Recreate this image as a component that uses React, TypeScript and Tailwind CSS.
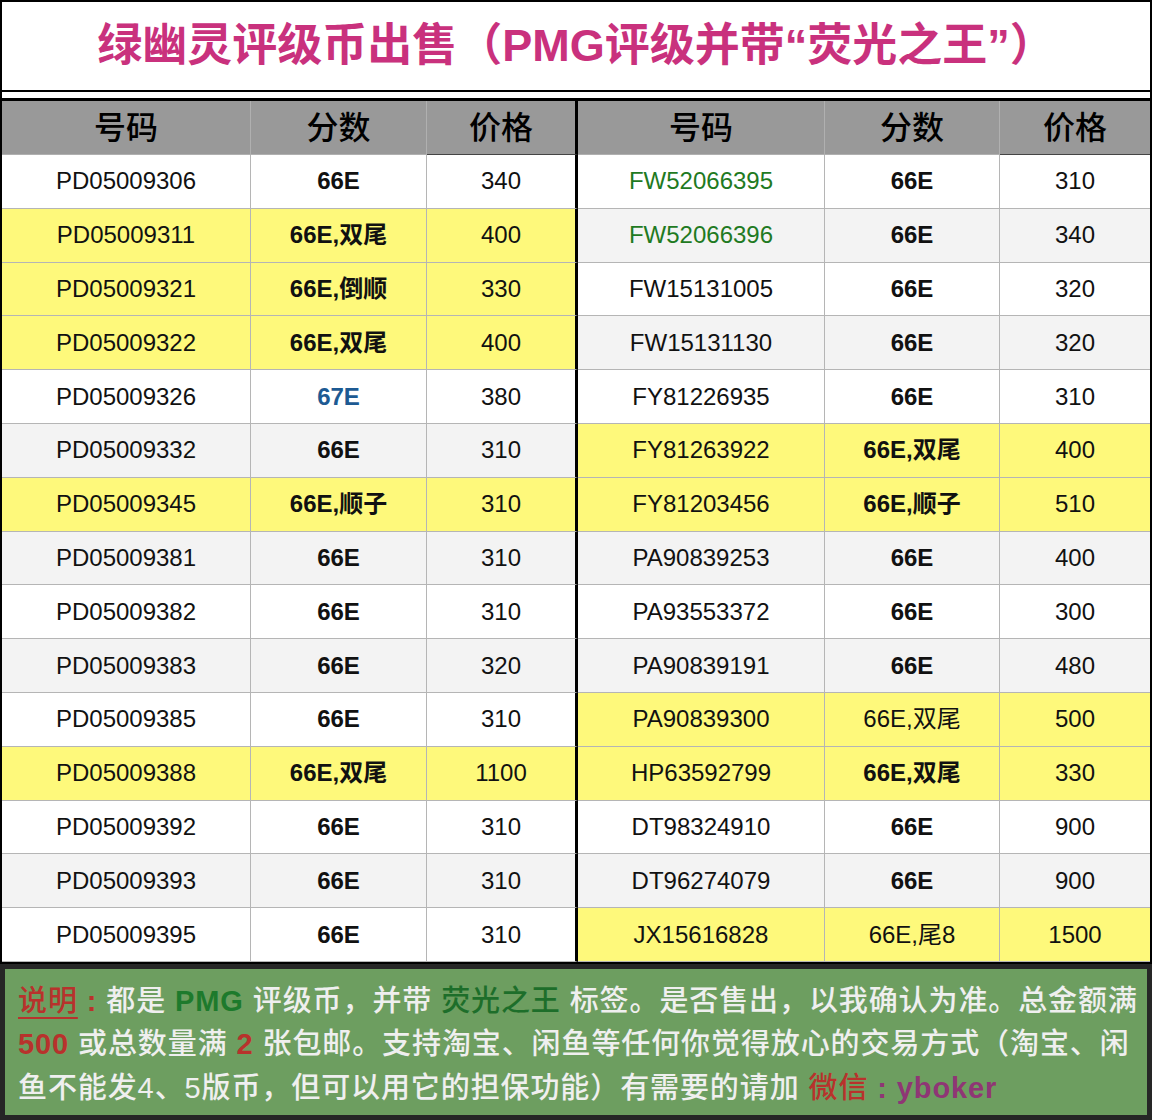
import React from "react";

type Cell = { code: string; score: string; price: string; y?: boolean; codeCls?: string; scoreCls?: string };

const left: Cell[] = [
  { code: "PD05009306", score: "66E", price: "340" },
  { code: "PD05009311", score: "66E,双尾", price: "400", y: true },
  { code: "PD05009321", score: "66E,倒顺", price: "330", y: true },
  { code: "PD05009322", score: "66E,双尾", price: "400", y: true },
  { code: "PD05009326", score: "67E", price: "380", scoreCls: "text-[#1d5a93] font-bold" },
  { code: "PD05009332", score: "66E", price: "310" },
  { code: "PD05009345", score: "66E,顺子", price: "310", y: true },
  { code: "PD05009381", score: "66E", price: "310" },
  { code: "PD05009382", score: "66E", price: "310" },
  { code: "PD05009383", score: "66E", price: "320" },
  { code: "PD05009385", score: "66E", price: "310" },
  { code: "PD05009388", score: "66E,双尾", price: "1100", y: true },
  { code: "PD05009392", score: "66E", price: "310" },
  { code: "PD05009393", score: "66E", price: "310" },
  { code: "PD05009395", score: "66E", price: "310" },
];

const right: Cell[] = [
  { code: "FW52066395", score: "66E", price: "310", codeCls: "text-[#1f7a22]" },
  { code: "FW52066396", score: "66E", price: "340", codeCls: "text-[#1f7a22]" },
  { code: "FW15131005", score: "66E", price: "320" },
  { code: "FW15131130", score: "66E", price: "320" },
  { code: "FY81226935", score: "66E", price: "310" },
  { code: "FY81263922", score: "66E,双尾", price: "400", y: true },
  { code: "FY81203456", score: "66E,顺子", price: "510", y: true },
  { code: "PA90839253", score: "66E", price: "400" },
  { code: "PA93553372", score: "66E", price: "300" },
  { code: "PA90839191", score: "66E", price: "480" },
  { code: "PA90839300", score: "66E,双尾", price: "500", y: true, scoreCls: "text-[#111] font-normal" },
  { code: "HP63592799", score: "66E,双尾", price: "330", y: true },
  { code: "DT98324910", score: "66E", price: "900" },
  { code: "DT96274079", score: "66E", price: "900" },
  { code: "JX15616828", score: "66E,尾8", price: "1500", y: true, scoreCls: "text-[#111] font-normal" },
];

const FONT = "font-['Liberation_Sans','Noto_Sans_CJK_SC',sans-serif]";

function cells(c: Cell, i: number, side: "l" | "r") {
  const bg = c.y ? "bg-[#fef97b]" : i % 2 === 1 ? "bg-[#f3f3f3]" : "bg-white";
  const base = `${bg} flex items-center justify-center border-b border-[#b5b5b5] text-[24px]`;
  return [
    <div key={side + "c" + i} className={`${base} border-r border-[#ababab] ${c.codeCls ?? "text-[#111]"}`}>{c.code}</div>,
    <div key={side + "s" + i} className={`${base} border-r border-[#ababab] ${c.scoreCls ?? "text-[#111] font-bold"}`}>{c.score}</div>,
    <div key={side + "p" + i} className={`${base} text-[#111] ${side === "l" ? "border-r-[3px] border-r-black" : ""}`}>{c.price}</div>,
  ];
}

export default function App() {
  const hdr = "flex items-center justify-center bg-[#999999] border-b border-[#444] text-[32px] font-medium text-black";
  return (
    <div className={`w-[1152px] h-[1120px] bg-white overflow-hidden ${FONT}`}>
      <div className="h-[92px] border-2 border-black flex items-center justify-center">
        <span className="text-[45px] font-bold text-[#c9317d]">绿幽灵评级币出售（PMG评级并带“荧光之王”）</span>
      </div>
      <div className="h-[6px] border-x-2 border-black" />
      <div className="border-t-[3px] border-x-2 border-black grid grid-cols-[249px_176px_151px_247px_175px_150px] grid-rows-[54px_repeat(15,53.8px)]">
        <div className={`${hdr} border-r border-[#b0b0b0]`}>号码</div>
        <div className={`${hdr} border-r border-[#b0b0b0]`}>分数</div>
        <div className={`${hdr} border-r-[3px] border-r-black`}>价格</div>
        <div className={`${hdr} border-r border-[#b0b0b0]`}>号码</div>
        <div className={`${hdr} border-r border-[#b0b0b0]`}>分数</div>
        <div className={hdr}>价格</div>
        {left.map((c, i) => [...cells(c, i, "l"), ...cells(right[i], i, "r")])}
      </div>
      <div className="h-[2px] bg-black" />
      <div className="h-[156px] border-[5px] border-[#262626] bg-[#6d9e60] pl-[13px] pt-[11px] text-[29px] leading-[43.5px] font-medium text-[#efefef] tracking-[0.9px]">
        <div className="whitespace-nowrap">
          <span className="text-[#b8322c] underline decoration-[#b8322c] decoration-2 underline-offset-[6px]">说明</span>
          <span className="text-[#b8322c] font-bold"> : </span>
          都是 <span className="text-[#1d7a2c] font-bold">PMG</span> 评级币，并带 <span className="text-[#1d6e2a]">荧光之王</span> 标签。是否售出，以我确认为准。总金额满
        </div>
        <div className="whitespace-nowrap">
          <span className="text-[#b8322c] font-bold">500</span> 或总数量满 <span className="text-[#b8322c] font-bold">2</span> 张包邮。支持淘宝、闲鱼等任何你觉得放心的交易方式（淘宝、闲
        </div>
        <div className="whitespace-nowrap">
          鱼不能发4、5版币，但可以用它的担保功能）有需要的请加 <span className="text-[#b8322c]">微信</span>
          <span className="text-[#8f3675] font-bold"> : yboker</span>
        </div>
      </div>
    </div>
  );
}
